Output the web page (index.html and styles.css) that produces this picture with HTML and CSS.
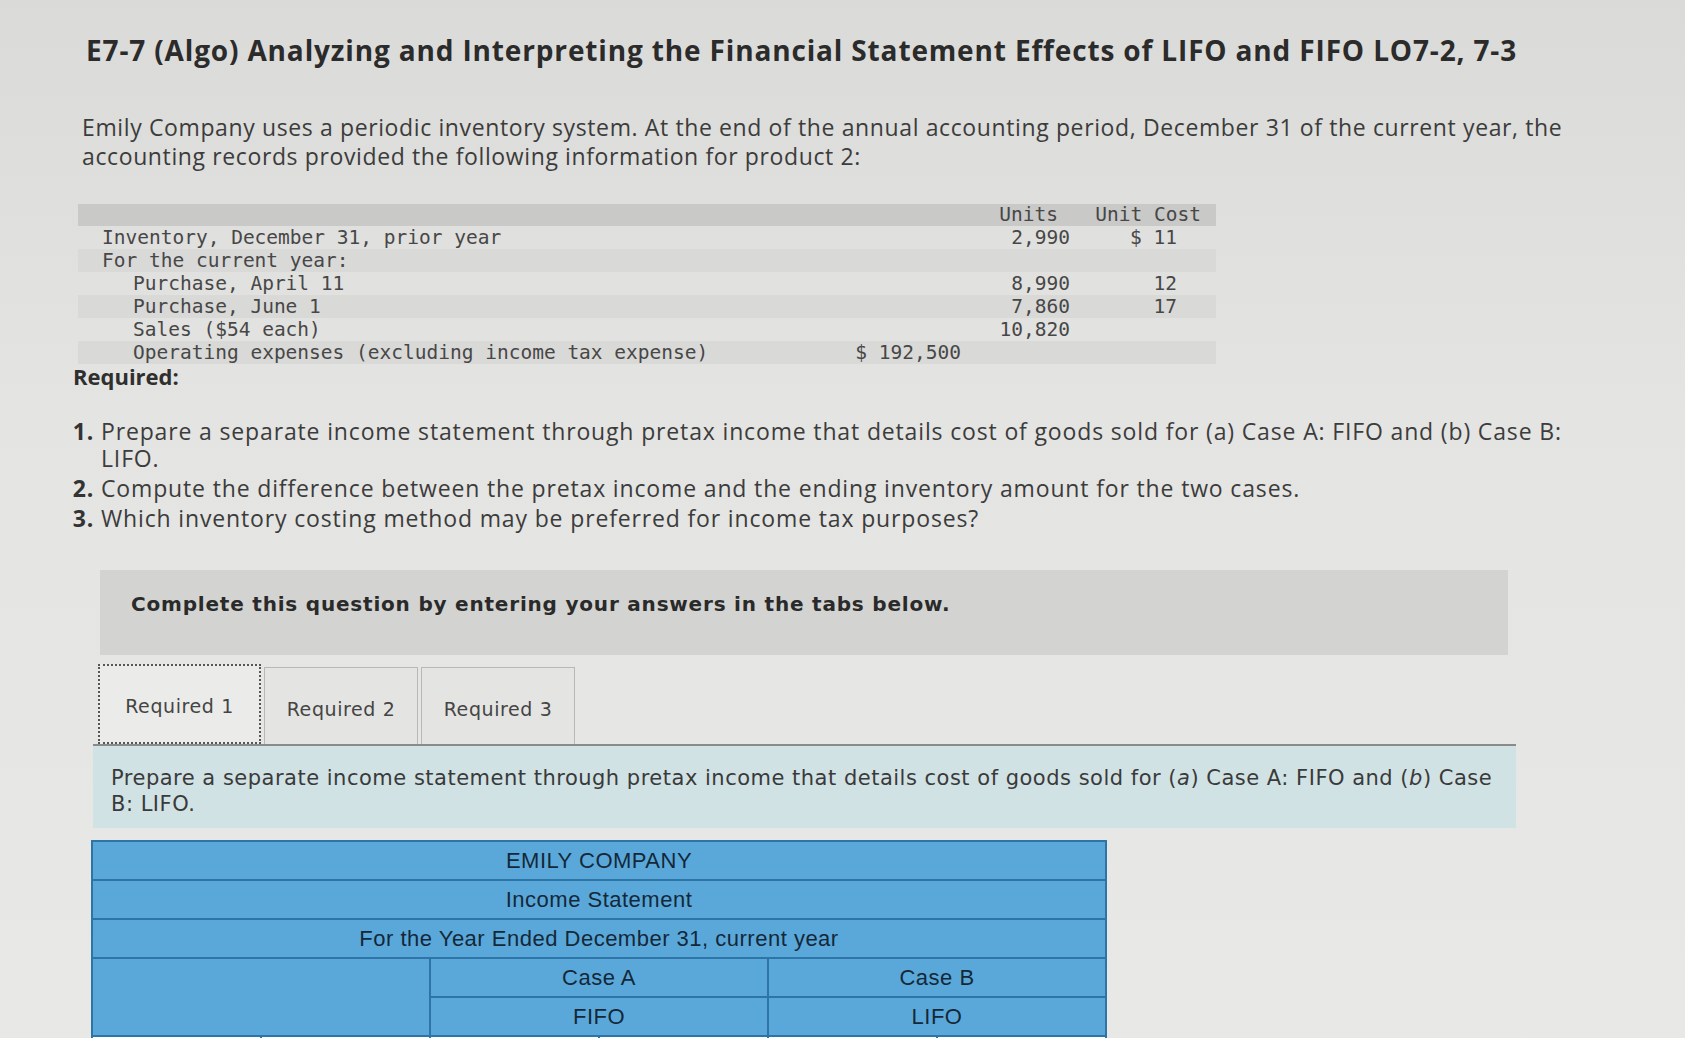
FILE: index.html
```html
<!DOCTYPE html>
<html>
<head>
<meta charset="utf-8">
<link rel="stylesheet" href="styles.css">
</head>
<body>
<div class="page">
  <h1 class="title">E7-7 (Algo) Analyzing and Interpreting the Financial Statement Effects of LIFO and FIFO LO7-2, 7-3</h1>
  <p class="intro">Emily Company uses a periodic inventory system. At the end of the annual accounting period, December 31 of the current year, the accounting records provided the following information for product 2:</p>

  <table class="data">
    <tr class="head">
      <td class="lbl"></td><td class="amt"></td><td class="units">Units</td><td class="cost">Unit Cost</td>
    </tr>
    <tr>
      <td class="lbl">Inventory, December 31, prior year</td><td class="amt"></td><td class="units">2,990</td><td class="cost">$ 11</td>
    </tr>
    <tr class="alt">
      <td class="lbl">For the current year:</td><td class="amt"></td><td class="units"></td><td class="cost"></td>
    </tr>
    <tr>
      <td class="lbl ind">Purchase, April 11</td><td class="amt"></td><td class="units">8,990</td><td class="cost">12</td>
    </tr>
    <tr class="alt">
      <td class="lbl ind">Purchase, June 1</td><td class="amt"></td><td class="units">7,860</td><td class="cost">17</td>
    </tr>
    <tr>
      <td class="lbl ind">Sales ($54 each)</td><td class="amt"></td><td class="units">10,820</td><td class="cost"></td>
    </tr>
    <tr class="alt">
      <td class="lbl ind">Operating expenses (excluding income tax expense)</td><td class="amt">$ 192,500</td><td class="units"></td><td class="cost"></td>
    </tr>
  </table>

  <div class="required">Required:</div>
  <ol class="reqlist">
    <li>Prepare a separate income statement through pretax income that details cost of goods sold for (a) Case A: FIFO and (b) Case B: LIFO.</li>
    <li>Compute the difference between the pretax income and the ending inventory amount for the two cases.</li>
    <li>Which inventory costing method may be preferred for income tax purposes?</li>
  </ol>

  <div class="complete">Complete this question by entering your answers in the tabs below.</div>

  <div class="tabs">
    <div class="tab active">Required 1</div>
    <div class="tab">Required 2</div>
    <div class="tab">Required 3</div>
  </div>

  <div class="instr">Prepare a separate income statement through pretax income that details cost of goods sold for (<i>a</i>) Case A: FIFO and (<i>b</i>) Case<br>B: LIFO.</div>

  <table class="stmt">
    <tr><td colspan="6">EMILY COMPANY</td></tr>
    <tr><td colspan="6">Income Statement</td></tr>
    <tr><td colspan="6">For the Year Ended December 31, current year</td></tr>
    <tr><td colspan="2" rowspan="2" class="blank"></td><td colspan="2">Case A</td><td colspan="2">Case B</td></tr>
    <tr><td colspan="2">FIFO</td><td colspan="2">LIFO</td></tr>
    <tr class="input"><td class="c1"></td><td class="c2"></td><td class="c3"></td><td class="c4"></td><td class="c5"></td><td class="c6"></td></tr>
  </table>
</div>
</body>
</html>
```

FILE: styles.css
```css
html, body {
  margin: 0;
  padding: 0;
}
body {
  background: linear-gradient(180deg, #dadad8 0%, #e4e4e2 40%, #e8e8e6 100%);
  color: #3a3a3a;
  font-family: "Open Sans", "Liberation Sans", sans-serif;
  height: 1038px;
  overflow: hidden;
}
.page {
  padding-top: 32px;
}
.title {
  margin: 0 0 0 86px;
  font-family: "Open Sans", sans-serif;
  font-weight: 700;
  font-size: 28px;
  letter-spacing: 0.85px;
  line-height: 36px;
  color: #2b2b2b;
  white-space: nowrap;
}
.intro {
  margin: 45px 0 0 82px;
  width: 1500px;
  font-size: 23px;
  letter-spacing: 0.62px;
  line-height: 29px;
  color: #3c3c3c;
}
.data {
  margin: 33px 0 0 78px;
  border-collapse: collapse;
  width: 1138px;
  font-family: "DejaVu Sans Mono", "Liberation Mono", monospace;
  font-size: 19.5px;
  color: #474747;
}
.data td {
  padding: 0;
  height: 23px;
  line-height: 23px;
  white-space: nowrap;
}
.data tr.head td {
  background: #c9c9c8;
  height: 22px;
  line-height: 22px;
}
.data tr.alt td {
  background: #d9d9d8;
}
.data .lbl { padding-left: 24px; }
.data .lbl.ind { padding-left: 55px; }
.data .amt { width: 92px; text-align: right; }
.data .units { width: 109px; text-align: right; }
.data tr.head .units { padding-right: 12px; width: 97px; }
.data .cost { width: 107px; text-align: right; padding-right: 39px; }
.data tr.head .cost { padding-right: 15px; width: 131px; }
.required {
  margin: 0 0 0 73px;
  font-weight: 700;
  font-size: 22px;
  line-height: 24px;
  color: #2f2f2f;
}
.reqlist {
  margin: 30px 0 0 0;
  padding: 0 0 0 101px;
  width: 1480px;
  font-size: 23px;
  letter-spacing: 0.85px;
  line-height: 27px;
  color: #3c3c3c;
}
.reqlist li {
  margin-bottom: 3px;
}
.reqlist li::marker {
  font-weight: 700;
  color: #333;
}
.complete {
  margin: 38px 0 0 100px;
  width: 1408px;
  height: 85px;
  box-sizing: border-box;
  padding: 21px 0 0 31px;
  background: #d3d3d1;
  font-family: "DejaVu Sans", Verdana, sans-serif;
  font-weight: 700;
  font-size: 20px;
  letter-spacing: 0.8px;
  line-height: 26px;
  color: #2a2a2a;
}
.tabs {
  display: flex;
  align-items: flex-end;
  gap: 3px;
  margin: 9px 0 0 98px;
  height: 80px;
}
.tab {
  box-sizing: border-box;
  width: 154px;
  height: 77px;
  border: 1px solid #b8b8b6;
  border-bottom: none;
  background: #e4e4e2;
  font-family: "DejaVu Sans", Verdana, sans-serif;
  font-size: 19px;
  letter-spacing: 0.6px;
  color: #444;
  display: flex;
  align-items: center;
  justify-content: center;
  padding-top: 6px;
}
.tab.active {
  width: 163px;
  height: 80px;
  border: 2px dotted #555;
  background: #ebebe9;
  padding-top: 4px;
}
.instr {
  margin: 0 0 0 93px;
  width: 1423px;
  height: 84px;
  box-sizing: border-box;
  border-top: 2px solid #8a8a88;
  background: #d1e2e5;
  padding: 19px 0 0 18px;
  font-family: "DejaVu Sans", Verdana, sans-serif;
  font-size: 21px;
  letter-spacing: 0.5px;
  line-height: 26px;
  color: #3a3a3a;
}
.stmt {
  margin: 12px 0 0 91px;
  width: 1016px;
  border-collapse: collapse;
  font-family: "Liberation Sans", Arial, sans-serif;
  font-size: 22px;
  letter-spacing: 0.5px;
  color: #14283a;
  table-layout: fixed;
}
.stmt td {
  background: #5aa8d9;
  border: 2px solid #2d75a6;
  height: 37px;
  text-align: center;
  padding: 0;
}
.stmt tr.input td {
  background: #fbfbfb;
  height: 30px;
}
.stmt .c1 { width: 147px; }
.stmt .c2 { width: 194px; }
.stmt .c3 { width: 167px; }
.stmt .c4 { width: 166px; }
.stmt .c5 { width: 165px; }
.stmt .c6 { width: 165px; }
```
